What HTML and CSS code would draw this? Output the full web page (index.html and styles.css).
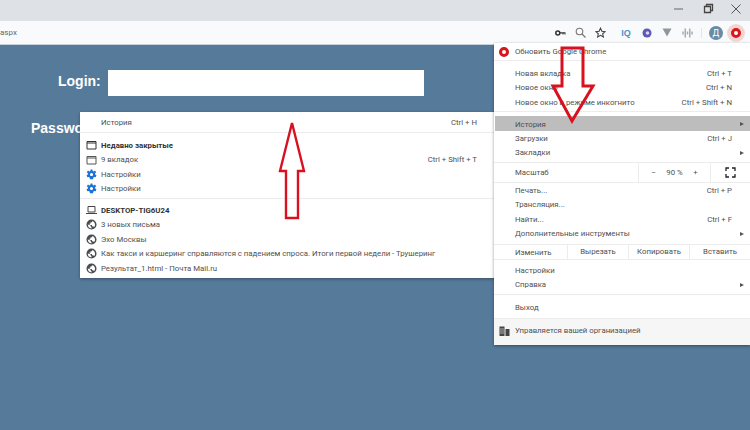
FILE: index.html
```html
<!DOCTYPE html>
<html lang="en">

<head>
    <meta charset="UTF-8">
    <title>Document</title>
    <link rel="stylesheet" href="styles.css">
</head>

<body>
    <div class="titlebar">
        <svg class="win_btn" width="12" height="12" viewBox="0 0 12 12"><path d="M1 6H10" stroke="#666" stroke-width="1"/></svg>
        <svg class="win_btn" width="12" height="12" viewBox="0 0 12 12"><path d="M2.500 3.500H8.500V9.500H2.500ZM4.500 3.500V1.500H10.500V7.500H8.500" fill="none" stroke="#444" stroke-width="1.300"/></svg>
        <svg class="win_btn" width="12" height="12" viewBox="0 0 12 12"><path d="M1.500 1.500L10.500 10.500M10.500 1.500L1.500 10.500" stroke="#555" stroke-width="1"/></svg>
    </div>
    <div class="toolbar">
        <div class="url">aspx</div>
        <div class="tools">
            <span class="slot"><svg width="11" height="8" viewBox="0 0 11 8"><circle cx="2.800" cy="4" r="2" fill="none" stroke="#333" stroke-width="1.500"/><path d="M4.500 3.300H10.500V5.500H9.500V4.600H8.500V5.500H7.500V4.600H4.500Z" fill="#333"/></svg></span>
            <span class="slot"><svg width="11" height="11" viewBox="0 0 11 11"><circle cx="4.500" cy="4.500" r="3.300" fill="none" stroke="#777" stroke-width="1.100"/><path d="M7 7L10.500 10.500" stroke="#777" stroke-width="1.200"/></svg></span>
            <span class="slot"><svg width="11" height="11" viewBox="0 0 24 24"><path d="M12 2.500L15 9.200L22 10L16.800 14.800L18.300 21.800L12 18.200L5.700 21.800L7.200 14.800L2 10L9 9.200Z" fill="none" stroke="#444" stroke-width="2.400"/></svg></span>
            <span class="slot iq">IQ</span>
            <span class="slot"><svg width="10" height="10" viewBox="0 0 10 10"><circle cx="5" cy="5" r="4.500" fill="#5e57b5"/><circle cx="5.500" cy="5" r="1.800" fill="#d8d6f0"/></svg></span>
            <span class="slot"><svg width="10" height="9" viewBox="0 0 10 9"><path d="M0.500 0.500H9.500L5 8.500Z" fill="#8f979c"/></svg></span>
            <span class="slot"><svg width="11" height="10" viewBox="0 0 11 10"><path d="M1 3.500V6.500M3.250 0.500V9.500M5.500 3.500V6.500M7.750 0.500V9.500M10 3.500V6.500" stroke="#a5adb2" stroke-width="1.500"/></svg></span>
            <span class="tool_sep"></span>
            <span class="slot"><span class="avatar">Д</span></span>
            <span class="slot"><span class="update_btn"><span class="red_ring"></span></span></span>
        </div>
    </div>

    <div class="page">
        <div class="login_row">
            <label class="login_label">Login:</label>
            <div class="login_input"></div>
        </div>
        <div class="pass_label">Password:</div>
    </div>

    <div class="submenu">
        <div class="sub_head"><span>История</span><span>Ctrl + H</span></div>
        <div class="sub_group">
            <div class="sub_item strong">
                <svg class="ic" width="11" height="10" viewBox="0 0 11 10"><path d="M1 1.500H10V9H1ZM1 3H10" fill="none" stroke="#333" stroke-width="1"/></svg>
                <span>Недавно закрытые</span>
            </div>
            <div class="sub_item">
                <svg class="ic" width="11" height="10" viewBox="0 0 11 10"><path d="M1 1.500H10V9H1ZM1 3H10" fill="none" stroke="#555" stroke-width="1"/></svg>
                <span>9 вкладок</span><span class="sub_key">Ctrl + Shift + T</span>
            </div>
            <div class="sub_item">
                <svg class="ic" width="11" height="11" viewBox="0 0 24 24"><use href="#gear"/></svg>
                <span>Настройки</span>
            </div>
            <div class="sub_item">
                <svg class="ic" width="11" height="11" viewBox="0 0 24 24"><use href="#gear"/></svg>
                <span>Настройки</span>
            </div>
        </div>
        <div class="sub_group last">
            <div class="sub_item strong">
                <svg class="ic" width="11" height="10" viewBox="0 0 11 10"><path d="M2 1.500H9V7H2ZM0 8.500H11" fill="none" stroke="#444" stroke-width="1"/></svg>
                <span>DESKTOP-TIG6U24</span>
            </div>
            <div class="sub_item">
                <svg class="ic" width="11" height="11" viewBox="0 0 24 24"><use href="#globe"/></svg>
                <span>3 новых письма</span>
            </div>
            <div class="sub_item">
                <svg class="ic" width="11" height="11" viewBox="0 0 24 24"><use href="#globe"/></svg>
                <span>Эхо Москвы</span>
            </div>
            <div class="sub_item">
                <svg class="ic" width="11" height="11" viewBox="0 0 24 24"><use href="#globe"/></svg>
                <span>Как такси и каршеринг справляются с падением спроса. Итоги первой недели - Трушеринг</span>
            </div>
            <div class="sub_item">
                <svg class="ic" width="11" height="11" viewBox="0 0 24 24"><use href="#globe"/></svg>
                <span>Результат_1.html - Почта Mail.ru</span>
            </div>
        </div>
    </div>

    <div class="menu">
        <div class="m_update">
            <span class="red_ring"></span>
            <span>Обновить Google Chrome</span>
        </div>
        <div class="m_group first">
            <div class="m_item"><span>Новая вкладка</span><span>Ctrl + T</span></div>
            <div class="m_item"><span>Новое окно</span><span>Ctrl + N</span></div>
            <div class="m_item"><span>Новое окно в режиме инкогнито</span><span>Ctrl + Shift + N</span></div>
        </div>
        <div class="m_group second">
            <div class="m_item hover"><span>История</span><span class="tri"></span></div>
            <div class="m_item"><span>Загрузки</span><span>Ctrl + J</span></div>
            <div class="m_item"><span>Закладки</span><span class="tri"></span></div>
        </div>
        <div class="m_zoom">
            <span class="zoom_name">Масштаб</span>
            <span class="zoom_ctl"><span>−</span><span>90 %</span><span>+</span></span>
            <span class="zoom_full">
                <svg width="11" height="11" viewBox="0 0 11 11"><path d="M1 4V1H4M7 1H10V4M10 7V10H7M4 10H1V7" fill="none" stroke="#222" stroke-width="1.300"/></svg>
            </span>
        </div>
        <div class="m_group third">
            <div class="m_item"><span>Печать...</span><span>Ctrl + P</span></div>
            <div class="m_item"><span>Трансляция...</span></div>
            <div class="m_item"><span>Найти...</span><span>Ctrl + F</span></div>
            <div class="m_item"><span>Дополнительные инструменты</span><span class="tri"></span></div>
        </div>
        <div class="m_edit">
            <span class="edit_name">Изменить</span>
            <span class="edit_btn">Вырезать</span>
            <span class="edit_btn">Копировать</span>
            <span class="edit_btn">Вставить</span>
        </div>
        <div class="m_group fourth">
            <div class="m_item"><span>Настройки</span></div>
            <div class="m_item"><span>Справка</span><span class="tri"></span></div>
        </div>
        <div class="m_group exit">
            <div class="m_item"><span>Выход</span></div>
        </div>
        <div class="m_footer">
            <svg width="11" height="10" viewBox="0 0 11 10"><path d="M0.500 0.500H5.500V10H0.500ZM6.500 3H10.500V10H6.500Z" fill="#444"/><path d="M2 2V8M4 2V8" stroke="#ddd" stroke-width="0.700"/></svg>
            <span>Управляется вашей организацией</span>
        </div>
    </div>

    <!-- red arrows drawn on the screenshot -->
    <svg class="arrow_up" width="40" height="100" viewBox="0 0 40 100"><path d="M20 2L8 50H14V97H26V50H32Z" fill="none" stroke="#d9101f" stroke-width="2.400"/></svg>
    <svg class="arrow_down" width="46" height="85" viewBox="0 0 46 85"><path d="M12 8H33V46H43L22 81L3 46H12Z" fill="none" stroke="#d9101f" stroke-width="3"/></svg>

    <svg width="0" height="0" class="defs">
        <defs>
            <path id="gear" fill="#1a73d8" fill-rule="evenodd" d="M10 1H14L14.600 4.300L16.800 5.200L19.600 3.300L22.300 7L19.800 9.200L20 12L22.800 13.800L21 18L17.800 17.300L15.800 19.200L15.500 22.500H8.500L8.200 19.200L6.200 17.300L3 18L1.200 13.800L4 12L4.200 9.200L1.700 7L4.400 3.300L7.200 5.200L9.400 4.300ZM12 8.500A3.500 3.500 0 1 0 12 15.500A3.500 3.500 0 1 0 12 8.500Z"/>
            <path id="globe" fill="#4a4d50" d="M12 1A11 11 0 1 0 12 23A11 11 0 1 0 12 1ZM4 12L10 14L10.500 17L12 18V20.500A8.500 8.500 0 0 1 4 12ZM17.500 18L16 16H13V13H8V10H10V7H13L14 4.300A8.500 8.500 0 0 1 17.500 18Z"/>
        </defs>
    </svg>
</body>

</html>
```

FILE: styles.css
```css
html, body {
    margin: 0;
    width: 750px;
    height: 430px;
    overflow: hidden;
}

body {
    font-family: Roboto, "Open Sans", sans-serif;
    font-size: 7.800px;
    color: #505050;
    display: flex;
    flex-direction: column;
    background-color: #567a9a;
}

.defs {
    position: absolute;
}

.titlebar {
    height: 21px;
    background-color: #dee1e6;
    display: flex;
    justify-content: flex-end;
    align-items: center;
    gap: 16.500px;
    padding: 0 8px 3px 0;
    box-sizing: border-box;
    flex: none;
}

.toolbar {
    height: 24px;
    background-color: #f9fafc;
    border-bottom: 1px solid #c9d2da;
    box-sizing: border-box;
    display: flex;
    justify-content: space-between;
    align-items: center;
    flex: none;
}

.url {
    font-size: 8px;
    color: #666;
}

.tools {
    display: flex;
    align-items: center;
    padding-right: 4px;
}

.slot {
    width: 20px;
    display: flex;
    justify-content: center;
    align-items: center;
}

.iq {
    font-family: "Liberation Sans", sans-serif;
    font-size: 9px;
    font-weight: bold;
    color: #4a93d0;
    margin: 0 1px 0 6px;
}

.tool_sep {
    width: 1px;
    height: 10px;
    background-color: #e3e5e8;
    margin: 0 4px;
}

.avatar {
    width: 14px;
    height: 14px;
    border-radius: 50%;
    background-color: #688ba6;
    color: white;
    font-size: 9px;
    line-height: 14px;
    text-align: center;
}

.update_btn {
    width: 18px;
    height: 18px;
    border-radius: 50%;
    background-color: #f3d6d3;
    display: flex;
    align-items: center;
    justify-content: center;
    flex: none;
}

.red_ring {
    width: 4px;
    height: 4px;
    border: 3px solid #d8161c;
    border-radius: 50%;
    background-color: white;
    flex: none;
}

.page {
    flex: 1;
    padding-top: 25px;
}

.login_row {
    display: flex;
    align-items: center;
    height: 26px;
    gap: 7px;
}

.login_label {
    font-family: "Liberation Sans", sans-serif;
    font-size: 14px;
    font-weight: bold;
    color: white;
    margin: 0 0 5px 58px;
}

.login_input {
    width: 316px;
    height: 26px;
    background-color: white;
}

.pass_label {
    font-family: "Liberation Sans", sans-serif;
    font-size: 14px;
    font-weight: bold;
    color: white;
    margin: 24px 0 0 31px;
}

/* history popup */
.submenu {
    position: absolute;
    left: 80px;
    top: 112px;
    width: 416px;
    height: 166px;
    box-sizing: border-box;
    background-color: white;
    box-shadow: 0 1px 3px rgba(0, 0, 0, 0.35);
}

.sub_head {
    height: 20.500px;
    box-sizing: border-box;
    padding: 2px 19px 0 21px;
    display: flex;
    justify-content: space-between;
    align-items: center;
    border-bottom: 1px solid #ececec;
}

.sub_group {
    padding: 5.250px 0 2px 0;
    border-bottom: 1px solid #ececec;
}

.sub_group.last {
    border-bottom: none;
    padding-top: 4px;
}

.sub_item {
    height: 14.500px;
    display: flex;
    align-items: center;
    padding: 0 19px 0 6px;
}

.sub_item .ic {
    width: 11px;
    margin-right: 4px;
    flex: none;
}

.sub_item.strong {
    font-weight: bold;
    color: #333;
}

.sub_key {
    margin-left: auto;
}

/* chrome main menu */
.menu {
    position: absolute;
    left: 494px;
    top: 43px;
    width: 256px;
    height: 302px;
    background-color: white;
    box-shadow: 0 1px 3px rgba(0, 0, 0, 0.4);
    display: flex;
    flex-direction: column;
}

.m_update {
    height: 18px;
    box-sizing: border-box;
    display: flex;
    align-items: center;
    gap: 6px;
    padding-left: 5px;
    border-bottom: 1px solid #ececec;
    flex: none;
}

.m_group {
    border-bottom: 1px solid #ececec;
    flex: none;
}

.m_group.first {
    padding: 4.750px 0 1.250px 0;
}

.m_group.second {
    padding: 4px 0 2px 0;
}

.m_group.third {
    padding: 0 0 3px 0;
}

.m_group.fourth {
    padding: 3px 0 2px 0;
}

.m_group.exit {
    padding: 5px 0 3px 0;
    border-bottom: none;
}

.m_item {
    height: 14.500px;
    display: flex;
    justify-content: space-between;
    align-items: center;
    padding: 0 18px 0 21px;
}

.m_item.hover {
    background-color: #bdbdbd;
    margin-left: 1px;
    padding-left: 20px;
    padding-top: 1.500px;
    height: 15.500px;
    box-sizing: border-box;
}

.tri {
    width: 0;
    height: 0;
    border-left: 4px solid #555;
    border-top: 2.500px solid transparent;
    border-bottom: 2.500px solid transparent;
    margin-right: -12px;
}

.m_zoom {
    height: 20px;
    box-sizing: border-box;
    display: flex;
    align-items: center;
    border-bottom: 1px solid #ececec;
    flex: none;
}

.zoom_name {
    width: 144px;
    padding-left: 21px;
    box-sizing: border-box;
}

.zoom_ctl {
    width: 73px;
    height: 100%;
    display: flex;
    justify-content: space-around;
    align-items: center;
    border-left: 1px solid #ececec;
    border-right: 1px solid #ececec;
    box-sizing: border-box;
    padding: 0 7px;
}

.zoom_full {
    flex: 1;
    display: flex;
    justify-content: center;
}

.m_edit {
    height: 15px;
    box-sizing: border-box;
    display: flex;
    align-items: center;
    border-bottom: 1px solid #ececec;
    flex: none;
}

.edit_name {
    width: 73px;
    padding-left: 21px;
    box-sizing: border-box;
}

.edit_btn {
    flex: 1;
    height: 100%;
    line-height: 14px;
    text-align: center;
    border-left: 1px solid #ececec;
}

.m_footer {
    flex: 1;
    background-color: #f6f6f6;
    border-top: 1px solid #ececec;
    display: flex;
    align-items: center;
    gap: 5px;
    padding: 0 0 2px 5px;
}

.arrow_up {
    position: absolute;
    left: 272px;
    top: 121px;
}

.arrow_down {
    position: absolute;
    left: 550px;
    top: 40px;
}
```
